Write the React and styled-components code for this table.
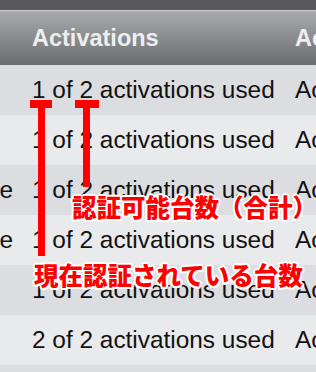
import React from "react";
import styled, { createGlobalStyle } from "styled-components";

const GlobalStyle = createGlobalStyle`
  html, body {
    margin: 0;
    padding: 0;
    background: #dcdde1;
  }
  body {
    font-family: "Liberation Sans", Arial, sans-serif;
  }
`;

const Screen = styled.div`
  position: relative;
  width: 316px;
  height: 372px;
  overflow: hidden;
  background: #dcdde1;
`;

const TopBand = styled.div`
  height: 10px;
  background: #59595b;
  border-bottom: 1px solid #cfd0d2;
`;

const HeaderRow = styled.div`
  display: grid;
  grid-template-columns: 13px 263px 1fr;
  height: 54px;
  align-items: center;
  background: linear-gradient(#a8aaac, #6b6c6e);
`;

const HeaderCell = styled.div`
  padding-left: 19px;
  font-size: 23.5px;
  font-weight: 700;
  color: #eceef2;
  white-space: nowrap;
  overflow: hidden;
`;

const Row = styled.div`
  display: grid;
  grid-template-columns: 13px 263px 1fr;
  height: 50px;
  align-items: center;
  background: ${(p) => (p.odd ? "#dcdde1" : "#e9eaeb")};
`;

const EdgeCell = styled.div`
  display: flex;
  justify-content: flex-end;
  overflow: hidden;
  white-space: nowrap;
  font-size: 24.4px;
  color: #111;
`;

const Cell = styled.div`
  padding-left: 19px;
  font-size: 24.4px;
  color: #111;
  white-space: nowrap;
  overflow: hidden;
`;

const Marker = styled.div`
  position: absolute;
  left: ${(p) => p.x}px;
  top: 100px;
  width: 7px;
  height: ${(p) => p.len}px;
  background: #ff0000;

  &::before {
    content: "";
    position: absolute;
    top: 0;
    left: ${(p) => -p.arm}px;
    width: ${(p) => p.bar}px;
    height: 8px;
    background: #ff0000;
  }
`;

const Note = styled.div`
  position: absolute;
  left: ${(p) => p.x}px;
  top: ${(p) => p.y}px;
  font-family: "Noto Sans CJK JP", sans-serif;
  font-size: 24.5px;
  line-height: 1;
  font-weight: 900;
  color: #ff0000;
  white-space: nowrap;
  text-shadow:
    2px 0 0 #fff, -2px 0 0 #fff, 0 2px 0 #fff, 0 -2px 0 #fff,
    1.5px 1.5px 0 #fff, -1.5px 1.5px 0 #fff, 1.5px -1.5px 0 #fff, -1.5px -1.5px 0 #fff;
`;

const rows = [
  { edge: "", used: 1 },
  { edge: "", used: 1 },
  { edge: "Inactive", used: 1 },
  { edge: "Inactive", used: 1 },
  { edge: "", used: 1 },
  { edge: "", used: 2 },
  { edge: "", used: 1 },
];

export default function App() {
  return (
    <Screen>
      <GlobalStyle />
      <TopBand />
      <HeaderRow>
        <HeaderCell />
        <HeaderCell>Activations</HeaderCell>
        <HeaderCell>Active</HeaderCell>
      </HeaderRow>
      {rows.map((r, i) => (
        <Row key={i} odd={i % 2 === 0}>
          <EdgeCell>{r.edge}</EdgeCell>
          <Cell>{r.used} of 2 activations used</Cell>
          <Cell>Active</Cell>
        </Row>
      ))}

      <Marker x={38} len={156} arm={8} bar={22} />
      <Marker x={83} len={87} arm={8} bar={24} />
      <Note x={72} y={195}>認証可能台数（合計）</Note>
      <Note x={34} y={263}>現在認証されている台数</Note>
    </Screen>
  );
}
